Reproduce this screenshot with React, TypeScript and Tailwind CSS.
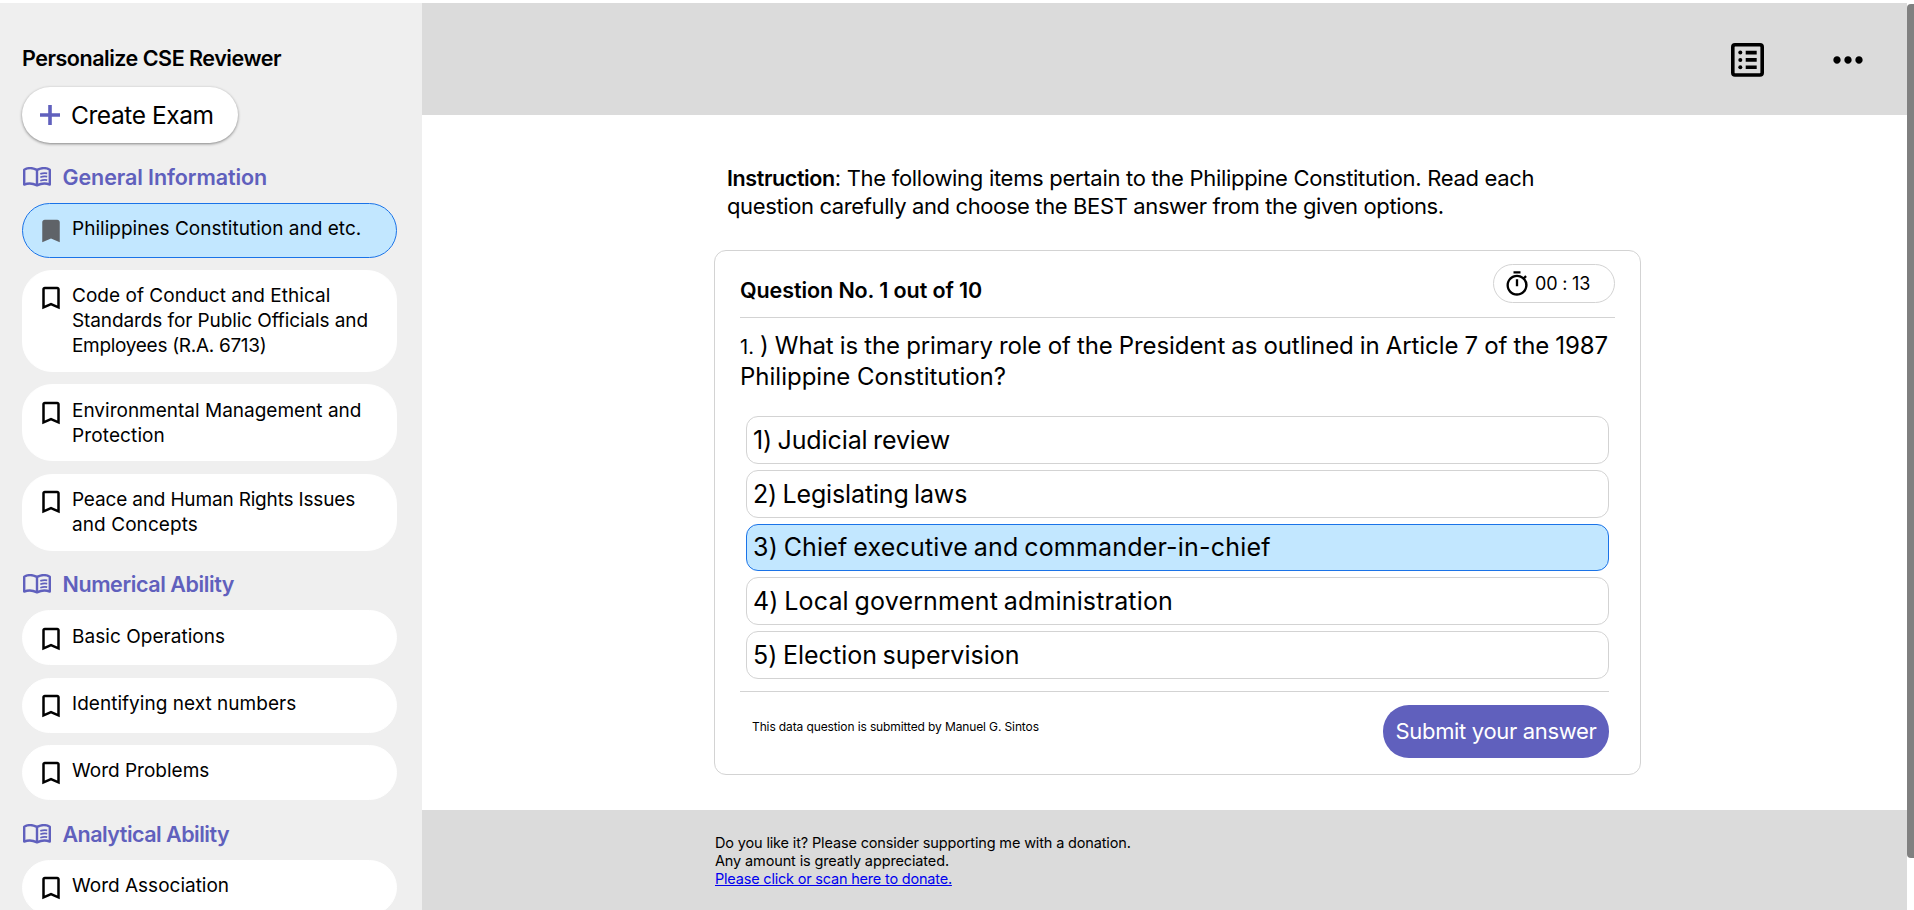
import { MdBookmark, MdBookmarkBorder, MdMoreHoriz, MdOutlineTimer } from "react-icons/md";

type Line = { text: string; tracking: string };
type Topic = { lines: Line[]; height: string; active?: boolean };
type Section = { title: Line; topics: Topic[] };

const sections: Section[] = [
  {
    title: { text: "General Information", tracking: "tracking-[-0.1px]" },
    topics: [
      {
        active: true,
        height: "h-[55px]",
        lines: [{ text: "Philippines Constitution and etc.", tracking: "tracking-[0.02px]" }],
      },
      {
        height: "h-[102px]",
        lines: [
          { text: "Code of Conduct and Ethical", tracking: "tracking-[0.03px]" },
          { text: "Standards for Public Officials and", tracking: "tracking-[-0.1px]" },
          { text: "Employees (R.A. 6713)", tracking: "tracking-[-0.3px]" },
        ],
      },
      {
        height: "h-[77px]",
        lines: [
          { text: "Environmental Management and", tracking: "tracking-normal" },
          { text: "Protection", tracking: "tracking-[0.12px]" },
        ],
      },
      {
        height: "h-[77px]",
        lines: [
          { text: "Peace and Human Rights Issues", tracking: "tracking-[-0.17px]" },
          { text: "and Concepts", tracking: "tracking-[0.08px]" },
        ],
      },
    ],
  },
  {
    title: { text: "Numerical Ability", tracking: "tracking-[-0.42px]" },
    topics: [
      { height: "h-[55px]", lines: [{ text: "Basic Operations", tracking: "tracking-[0.04px]" }] },
      { height: "h-[55px]", lines: [{ text: "Identifying next numbers", tracking: "tracking-[0.03px]" }] },
      { height: "h-[55px]", lines: [{ text: "Word Problems", tracking: "tracking-normal" }] },
    ],
  },
  {
    title: { text: "Analytical Ability", tracking: "tracking-[-0.52px]" },
    topics: [
      { height: "h-[55px]", lines: [{ text: "Word Association", tracking: "tracking-normal" }] },
    ],
  },
];

const options: (Line & { selected?: boolean })[] = [
  { text: "1) Judicial review", tracking: "tracking-[-0.1px]" },
  { text: "2) Legislating laws", tracking: "tracking-[-0.14px]" },
  { text: "3) Chief executive and commander-in-chief", tracking: "tracking-[0.19px]", selected: true },
  { text: "4) Local government administration", tracking: "tracking-[0.16px]" },
  { text: "5) Election supervision", tracking: "tracking-[0.02px]" },
];

function PlusIcon() {
  return (
    <svg width="20" height="20" viewBox="0 0 20 20" fill="currentColor" className="shrink-0 text-[#6060bd]">
      <path d="M8.2 0h3.6v8.2H20v3.6h-8.2V20H8.2v-8.2H0V8.2h8.2z" />
    </svg>
  );
}

function BookIcon() {
  return (
    <svg width="28" height="20" viewBox="0 0 28 20" fill="none" stroke="currentColor" className="shrink-0">
      <path
        d="M1.2 2.7Q7.2 -0.6 14 2.9V18.4Q7.4 15.1 1.2 17.6ZM14 2.9Q20.8 -0.6 26.8 2.7V17.6Q20.6 15.1 14 18.4"
        strokeWidth="2.4"
        strokeLinejoin="round"
      />
      <path d="M17.3 6.9Q20.8 5.6 24.2 6.3M17.3 10.3Q20.8 9 24.2 9.7M17.3 13.7Q20.8 12.4 24.2 13.1" strokeWidth="1.7" />
    </svg>
  );
}

function ListIcon() {
  return (
    <svg width="33" height="34" viewBox="0 0 33 34" fill="currentColor">
      <rect x="1.8" y="1.8" width="29.4" height="30.2" rx="2.2" fill="none" stroke="currentColor" strokeWidth="3.6" />
      <circle cx="9.3" cy="9.6" r="2" />
      <circle cx="9.3" cy="16.9" r="2" />
      <circle cx="9.3" cy="24.2" r="2" />
      <path d="M14.7 7.8h11v3.6h-11zM14.7 15.1h11v3.6h-11zM14.7 22.4h11v3.6h-11z" />
    </svg>
  );
}

function TopicPill({ topic }: { topic: Topic }) {
  const Icon = topic.active ? MdBookmark : MdBookmarkBorder;
  return (
    <button
      className={`flex w-[375px] shrink-0 items-start rounded-[30px] border pl-[13px] pt-[12.4px] text-left ${topic.height} ${
        topic.active ? "border-[#1a73e8] bg-[#c2e7ff]" : "border-white bg-white"
      }`}
    >
      <Icon size={30} className={`shrink-0 ${topic.active ? "text-[#5f6368]" : "text-black"}`} />
      <span className="ml-1.5 text-[19px] leading-[25px]">
        {topic.lines.map((l) => (
          <span key={l.text} className={`block whitespace-nowrap ${l.tracking}`}>
            {l.text}
          </span>
        ))}
      </span>
    </button>
  );
}

function Sidebar() {
  return (
    <aside className="flex w-[422px] shrink-0 flex-col overflow-hidden bg-[#efefef] pl-[22px]">
      <h1 className="mt-[41px] text-[21.5px] font-semibold leading-7 tracking-[-0.48px]">
        Personalize CSE Reviewer
      </h1>
      <button className="mt-[15px] flex h-14 w-[216px] shrink-0 items-center rounded-full bg-white pl-[18px] shadow-[0_1px_3px_rgba(0,0,0,0.45)]">
        <PlusIcon />
        <span className="ml-[11px] whitespace-nowrap text-[24.5px] tracking-[-0.42px]">Create Exam</span>
      </button>
      {sections.map((s) => (
        <section key={s.title.text} className="flex flex-col">
          <h2 className="flex items-center pb-3 pl-px pt-[19.8px] text-[21.5px] font-semibold leading-7 text-[#6060bd]">
            <BookIcon />
            <span className={`ml-[11.5px] ${s.title.tracking}`}>{s.title.text}</span>
          </h2>
          <div className="flex flex-col gap-[12.3px]">
            {s.topics.map((t) => (
              <TopicPill key={t.lines[0].text} topic={t} />
            ))}
          </div>
        </section>
      ))}
    </aside>
  );
}

function QuestionCard() {
  return (
    <section className="mt-[30px] h-[525px] w-[927px] rounded-xl border border-[#d3d3d3] px-[25px]">
      <div className="flex h-[67px] items-start justify-between border-b border-[#d3d3d3]">
        <h2 className="mt-[25px] text-[21.5px] font-semibold leading-7 tracking-[-0.09px]">
          Question No. 1 out of 10
        </h2>
        <div className="mt-[13px] flex h-[39px] w-[122px] items-center rounded-full border border-[#d3d3d3] pl-[9px]">
          <MdOutlineTimer size={28} />
          <span className="ml-1 text-lg tracking-[-0.2px]">00 : 13</span>
        </div>
      </div>
      <p className="mt-[11.5px] whitespace-nowrap text-2xl leading-[31px]">
        <span className="flex h-[31px] items-baseline">
          <span className="w-5 text-xl leading-[29px]">1.</span>
          <span className="tracking-[-0.09px] [word-spacing:-0.5px]">
            ) What is the primary role of the President as outlined in Article 7 of the 1987
          </span>
        </span>
        <span className="block">Philippine Constitution?</span>
      </p>
      <div className="mt-[24.5px] flex w-[869px] flex-col gap-1.5 border-b border-[#d3d3d3] pb-3 pl-1.5">
        {options.map((o) => (
          <button
            key={o.text}
            className={`flex h-[47.75px] items-center rounded-xl border pl-1.5 pt-[1.5px] text-left text-[25px] ${
              o.selected ? "border-[#1a73e8] bg-[#c2e7ff]" : "border-[#d3d3d3] bg-white"
            }`}
          >
            <span className={`whitespace-nowrap [word-spacing:-1.5px] ${o.tracking}`}>{o.text}</span>
          </button>
        ))}
      </div>
      <div className="mt-[13px] flex w-[869px] items-start justify-between pl-3">
        <p className="mt-[14px] text-xs tracking-[-0.12px]">
          This data question is submitted by Manuel G. Sintos
        </p>
        <button className="h-[53px] w-[226px] whitespace-nowrap rounded-[26px] bg-[#6060bd] text-[22px] tracking-[-0.33px] text-white">
          Submit your answer
        </button>
      </div>
    </section>
  );
}

export default function App() {
  return (
    <div className="flex h-[910px] w-[1914px] overflow-hidden bg-white pt-[3px] font-['Inter','Liberation_Sans',sans-serif] text-black">
      <Sidebar />
      <div className="flex w-[1485px] shrink-0 flex-col">
        <header className="flex h-28 shrink-0 items-center justify-end gap-[62px] bg-[#dbdbdb] pr-[37px] pt-[2px]">
          <ListIcon />
          <MdMoreHoriz size={44} />
        </header>
        <main className="h-[695px] shrink-0 pl-[292px] pt-[49px]">
          <p className="ml-[13px] whitespace-nowrap text-[22px] leading-7">
            <span className="block tracking-[-0.3px]">
              <strong className="text-[21.5px] font-semibold tracking-[-0.4px]">Instruction</strong>: The following
              items pertain to the Philippine Constitution. Read each
            </span>
            <span className="block tracking-[-0.38px]">
              question carefully and choose the BEST answer from the given options.
            </span>
          </p>
          <QuestionCard />
        </main>
        <footer className="flex-1 bg-[#dbdbdb] pl-[293px] pt-[24px] text-[14.5px] leading-[18px]">
          <p className="tracking-[-0.15px]">Do you like it? Please consider supporting me with a donation.</p>
          <p className="tracking-[-0.13px]">Any amount is greatly appreciated.</p>
          <a href="#donate" className="block w-fit tracking-[-0.2px] text-[#0000ee] underline">
            Please click or scan here to donate.
          </a>
        </footer>
      </div>
      <div className="flex-1 pt-px">
        <div className="h-[854px] w-[7px] rounded-l-[4px] bg-[#808080]" />
      </div>
    </div>
  );
}
